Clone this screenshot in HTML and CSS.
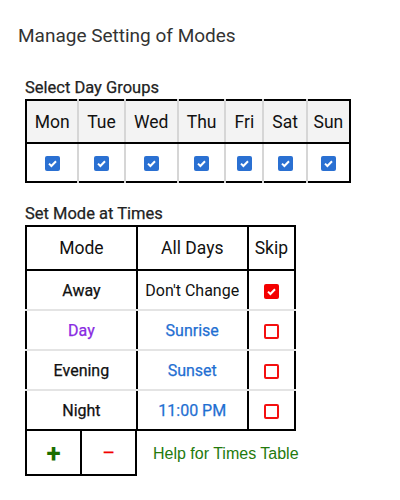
FILE: index.html
```html
<!DOCTYPE html>
<html>
<head>
<meta charset="utf-8">
<link rel="stylesheet" href="styles.css">
</head>
<body>
<div class="page">
  <h1 class="title">Manage Setting of Modes</h1>

  <h2 class="section">Select Day Groups</h2>
  <table class="days">
    <thead>
      <tr>
        <th class="c-mon">Mon</th><th class="c-tue">Tue</th><th class="c-wed">Wed</th><th class="c-thu">Thu</th><th class="c-fri">Fri</th><th class="c-sat">Sat</th><th class="c-sun">Sun</th>
      </tr>
    </thead>
    <tbody>
      <tr>
        <td><span class="cb cb-blue"><svg viewBox="0 0 15 15"><path d="M4 7.6 L6.4 10 L11 5.2" fill="none" stroke="#fff" stroke-width="2"/></svg></span></td>
        <td><span class="cb cb-blue"><svg viewBox="0 0 15 15"><path d="M4 7.6 L6.4 10 L11 5.2" fill="none" stroke="#fff" stroke-width="2"/></svg></span></td>
        <td><span class="cb cb-blue"><svg viewBox="0 0 15 15"><path d="M4 7.6 L6.4 10 L11 5.2" fill="none" stroke="#fff" stroke-width="2"/></svg></span></td>
        <td><span class="cb cb-blue"><svg viewBox="0 0 15 15"><path d="M4 7.6 L6.4 10 L11 5.2" fill="none" stroke="#fff" stroke-width="2"/></svg></span></td>
        <td><span class="cb cb-blue"><svg viewBox="0 0 15 15"><path d="M4 7.6 L6.4 10 L11 5.2" fill="none" stroke="#fff" stroke-width="2"/></svg></span></td>
        <td><span class="cb cb-blue"><svg viewBox="0 0 15 15"><path d="M4 7.6 L6.4 10 L11 5.2" fill="none" stroke="#fff" stroke-width="2"/></svg></span></td>
        <td><span class="cb cb-blue"><svg viewBox="0 0 15 15"><path d="M4 7.6 L6.4 10 L11 5.2" fill="none" stroke="#fff" stroke-width="2"/></svg></span></td>
      </tr>
    </tbody>
  </table>

  <h2 class="section section-2">Set Mode at Times</h2>
  <table class="modes">
    <thead>
      <tr><th class="m-mode">Mode</th><th class="m-days">All Days</th><th class="m-skip">Skip</th></tr>
    </thead>
    <tbody>
      <tr>
        <td class="mode">Away</td>
        <td class="time time-plain">Don't Change</td>
        <td class="skip"><span class="cb cb-red-on"><svg viewBox="0 0 15 15"><path d="M4 7.6 L6.4 10 L11 5.2" fill="none" stroke="#fff" stroke-width="2"/></svg></span></td>
      </tr>
      <tr>
        <td class="mode mode-day">Day</td>
        <td class="time">Sunrise</td>
        <td class="skip"><span class="cb cb-red-off"></span></td>
      </tr>
      <tr>
        <td class="mode">Evening</td>
        <td class="time">Sunset</td>
        <td class="skip"><span class="cb cb-red-off"></span></td>
      </tr>
      <tr class="last">
        <td class="mode">Night</td>
        <td class="time">11:00 PM</td>
        <td class="skip"><span class="cb cb-red-off"></span></td>
      </tr>
    </tbody>
  </table>

  <div class="actions">
    <div class="btns">
      <div class="btn btn-add">+</div>
      <div class="btn btn-del">−</div>
    </div>
    <div class="help">Help for Times Table</div>
  </div>
</div>
</body>
</html>
```

FILE: styles.css
```css
* { box-sizing: border-box; }
html, body { margin: 0; padding: 0; background: #fff; }
body { font-family: Roboto, "Noto Sans", sans-serif; color: #111; }

.page { padding: 26px 0 0 25px; }

.title {
  margin: 0 0 0 -7px;
  font-size: 19px;
  font-weight: 400;
  line-height: 20px;
  color: #333;
}

.section {
  margin: 32px 0 2px 0;
  font-size: 16.5px;
  font-weight: 400;
  -webkit-text-stroke: 0.25px #222;
  line-height: 19px;
  color: #222;
}
.section-2 { margin-top: 21px; margin-bottom: 2px; }

table { border-collapse: collapse; }

.days {
  border: 2px solid #000;
  width: 326px;
}
.days th {
  background: #f3f3f3;
  font-weight: 400;
  font-size: 17.5px;
  height: 43px;
  padding: 0;
  border-left: 2px solid #d6d6d6;
  border-bottom: 2px solid #000;
  color: #111;
}
.days td {
  height: 39px;
  padding: 0;
  text-align: center;
  border-left: 2px solid #d6d6d6;
}
.days th:first-child, .days td:first-child { border-left: none; }
.c-mon { width: 52px; }
.c-tue { width: 46px; }
.c-wed { width: 53px; }
.c-thu { width: 47px; }
.c-fri { width: 38px; }
.c-sat { width: 43px; }
.c-sun { width: 43px; }

.cb {
  display: inline-block;
  width: 15px;
  height: 15px;
  border-radius: 2px;
  vertical-align: middle;
}
.cb svg { display: block; width: 15px; height: 15px; }
.cb-blue { background: #2a70d2; }
.cb-red-on { background: #f40000; }
.cb-red-off { border: 2px solid #f41010; background: #fff; }

.modes {
  border: 2px solid #000;
  width: 271px;
}
.modes th {
  font-weight: 400;
  font-size: 17.5px;
  height: 44px;
  padding: 0;
  border-left: 2px solid #000;
  border-bottom: 2px solid #000;
  color: #111;
}
.modes th:first-child { border-left: none; }
.m-mode { width: 110px; }
.m-days { width: 110px; }
.m-skip { width: 47px; }

.modes td {
  height: 40px;
  padding: 0;
  text-align: center;
  font-size: 16px;
  border-left: 2px solid #000;
  border-bottom: 2px solid #e4e4e4;
}
.modes td:first-child { border-left: none; }
.modes tr.last td { border-bottom: none; }

.mode { font-weight: 400; color: #111; -webkit-text-stroke: 0.25px #111; }
.mode-day { color: #8a2be2; -webkit-text-stroke: 0.25px #8a2be2; }
.time { font-weight: 400; color: #1f6fd2; -webkit-text-stroke: 0.25px #1f6fd2; }
.time-plain { color: #111; -webkit-text-stroke: 0; font-size: 15.2px; }

.actions { display: flex; align-items: center; }
.btns {
  display: flex;
  border: 2px solid #000;
  border-top: none;
  width: 112px;
  height: 45px;
}
.btn {
  flex: 1;
  display: flex;
  align-items: center;
  justify-content: center;
  font-size: 26px;
  font-weight: 700;
}
.btn-add { color: #1a6e00; border-right: 2px solid #000; }
.btn-del { color: #f20000; font-weight: 400; font-size: 24px; }

.help {
  margin-left: 16px;
  font-family: "Liberation Sans", Arial, sans-serif;
  font-size: 16px;
  color: #237a0c;
}
```
